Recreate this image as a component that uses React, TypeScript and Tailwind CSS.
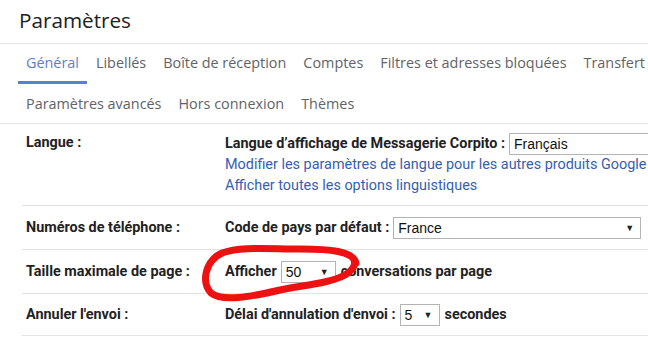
import React from 'react'

const tabsTop = ['Général', 'Libellés', 'Boîte de réception', 'Comptes', 'Filtres et adresses bloquées', 'Transfert et POP/IMAP']
const tabsBottom = ['Paramètres avancés', 'Hors connexion', 'Thèmes']

function Select({ value, className }: { value: string; className: string }) {
    return (
        <span
            className={`inline-flex items-center justify-between h-[22px] border border-[#b4b4b4] bg-white pl-[4px] pr-[6px] text-[14px] font-normal text-[#111] ${className}`}
            style={{ fontFamily: '"Liberation Sans", Arial, sans-serif' }}
        >
            <span>{value}</span>
            <span className="text-[9px] text-[#222]">▼</span>
        </span>
    )
}

function Row({ label, children, className }: { label: string; children: React.ReactNode; className: string }) {
    return (
        <div className={`flex border-b border-[#e3e3e3] ${className}`}>
            <div className="w-[203px] shrink-0 pl-[4px] font-bold text-[#222]">{label}</div>
            <div className="flex-1 min-w-0">{children}</div>
        </div>
    )
}

export default function App() {
    return (
        <div
            className="relative w-[648px] h-[338px] overflow-hidden bg-white text-[14.4px]"
            style={{ fontFamily: 'Roboto, "Open Sans", sans-serif' }}
        >
            <div className="h-[43px] pl-[19px] pt-[6px] text-[20.7px] leading-[28px] text-[#202124]" style={{ fontFamily: '"Open Sans", Roboto, sans-serif' }}>
                Paramètres
            </div>

            <div
                className="border-t border-b border-[#e8e8e8] text-[14.4px] text-[#5f6368] font-medium"
                style={{ fontFamily: '"Open Sans", Roboto, sans-serif' }}
            >
                <div className="flex h-[40px] pl-[18px] gap-[1px] whitespace-nowrap">
                    {tabsTop.map((t, i) => (
                        <div
                            key={t}
                            className={`flex items-center px-[8px] border-b-[3px] ${i === 0 ? 'border-[#5b7fc9] text-[#5b7fc9]' : 'border-transparent'}`}
                        >
                            <span className="pt-[1px]">{t}</span>
                        </div>
                    ))}
                </div>
                <div className="flex h-[39px] pl-[18px] gap-[1px] whitespace-nowrap">
                    {tabsBottom.map(t => (
                        <div key={t} className="flex items-center px-[8px]">
                            {t}
                        </div>
                    ))}
                </div>
            </div>

            <div className="ml-[22px] leading-[20px]">
                <Row label="Langue :" className="h-[82px] pt-[9px]">
                    <div className="flex items-center whitespace-nowrap font-bold text-[#222]">
                        <span>Langue d’affichage de Messagerie Corpito :</span>
                        <Select value="Français" className="ml-[4px] w-[160px] shrink-0 h-[20px]" />
                    </div>
                    <div className="whitespace-nowrap text-[#3560b3] leading-[20.5px]">
                        <div>Modifier les paramètres de langue pour les autres produits Google</div>
                        <div>Afficher toutes les options linguistiques</div>
                    </div>
                </Row>

                <Row label="Numéros de téléphone :" className="h-[44px] items-center">
                    <div className="flex items-center whitespace-nowrap font-bold text-[#222]">
                        <span>Code de pays par défaut :</span>
                        <Select value="France" className="ml-[4px] w-[248px]" />
                    </div>
                </Row>

                <Row label="Taille maximale de page :" className="h-[44px] items-center">
                    <div className="flex items-center whitespace-nowrap font-bold text-[#222]">
                        <span>Afficher</span>
                        <Select value="50" className="ml-[4px] w-[55px]" />
                        <span className="ml-[5px]">conversations par page</span>
                    </div>
                </Row>

                <Row label="Annuler l'envoi :" className="h-[42px] items-center">
                    <div className="flex items-center whitespace-nowrap font-bold text-[#222]">
                        <span>Délai d'annulation d'envoi :</span>
                        <Select value="5" className="ml-[4px] w-[40px]" />
                        <span className="ml-[5px]">secondes</span>
                    </div>
                </Row>
            </div>

            <svg className="absolute left-0 top-0 pointer-events-none" width="648" height="338" viewBox="0 0 648 338">
                <path
                    d="M356 263 C 353 251, 330 249, 300 249 C 270 249, 240 246, 222 253 C 205 261, 201 282, 211 293 C 222 302, 250 297, 280 290 C 305 285, 330 283, 345 275 C 353 270, 357 264, 353 258"
                    fill="none"
                    stroke="#ee1111"
                    strokeWidth="7"
                    strokeLinecap="round"
                    strokeLinejoin="round"
                />
            </svg>
        </div>
    )
}
